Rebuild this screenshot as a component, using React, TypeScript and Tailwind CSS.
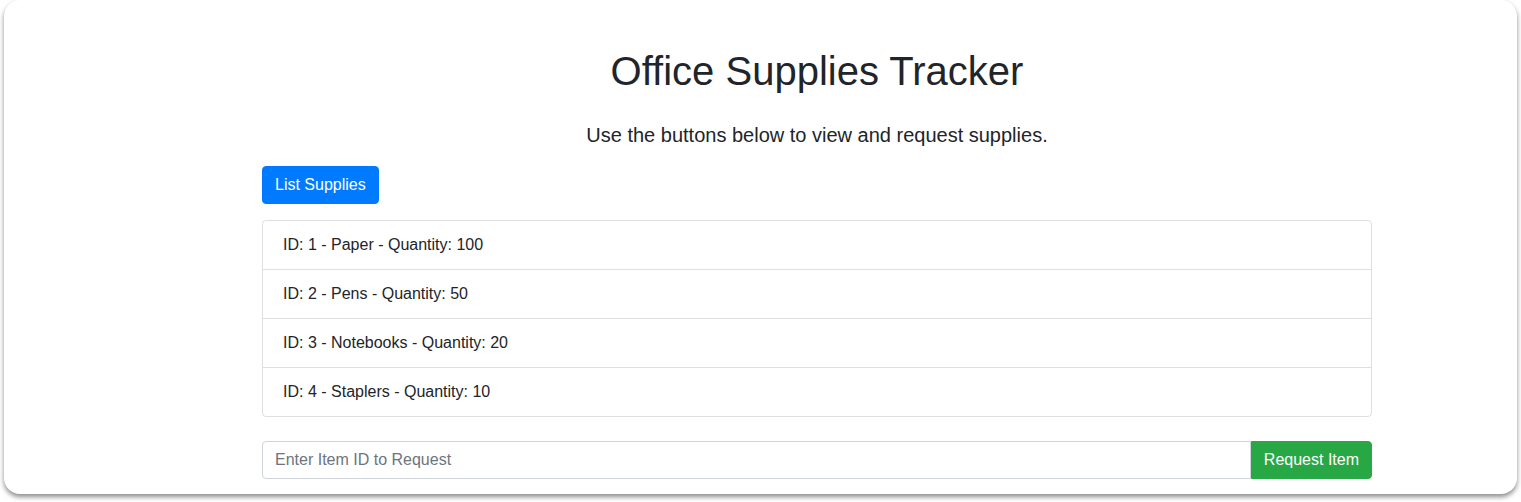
import React, { useState } from 'react';

type Supply = { id: number; name: string; quantity: number };

const SUPPLIES: Supply[] = [
    { id: 1, name: 'Paper', quantity: 100 },
    { id: 2, name: 'Pens', quantity: 50 },
    { id: 3, name: 'Notebooks', quantity: 20 },
    { id: 4, name: 'Staplers', quantity: 10 },
];

const App: React.FC = () => {
    const [itemId, setItemId] = useState('');

    return (
        <div className="min-h-screen bg-white px-1 text-[#212529] font-['Liberation_Sans',Arial,sans-serif]">
            <div className="rounded-2xl bg-white shadow-[0_3px_5px_rgba(0,0,0,0.45)] pt-[47px] pb-[15px]">
                <div className="ml-[258px] w-[1110px]">
                    <h1 className="text-center text-[40px] leading-[48px] font-medium">Office Supplies Tracker</h1>
                    <p className="mt-[25px] text-center text-[20px] leading-[30px]">Use the buttons below to view and request supplies.</p>
                    <button type="button" className="mt-4 rounded bg-[#007bff] border border-[#007bff] px-3 py-1.5 text-base leading-6 text-white">
                        List Supplies
                    </button>
                    <ul className="mt-4 rounded border border-[rgba(0,0,0,0.125)]">
                        {SUPPLIES.map((s, i) => (
                            <li key={s.id} className={`px-5 py-3 text-base leading-6 ${i > 0 ? 'border-t border-[rgba(0,0,0,0.125)]' : ''}`}>
                                ID: {s.id} - {s.name} - Quantity: {s.quantity}
                            </li>
                        ))}
                    </ul>
                    <div className="mt-6 flex">
                        <input
                            value={itemId}
                            onChange={e => setItemId(e.target.value)}
                            placeholder="Enter Item ID to Request"
                            className="flex-1 h-[38px] rounded-l border border-[#ced4da] px-3 text-base text-[#495057] placeholder-[#6c757d] outline-none"
                        />
                        <button type="button" className="h-[38px] rounded-r bg-[#28a745] border border-[#28a745] px-3 text-base leading-6 text-white">
                            Request Item
                        </button>
                    </div>
                </div>
            </div>
        </div>
    );
};

export default App;
